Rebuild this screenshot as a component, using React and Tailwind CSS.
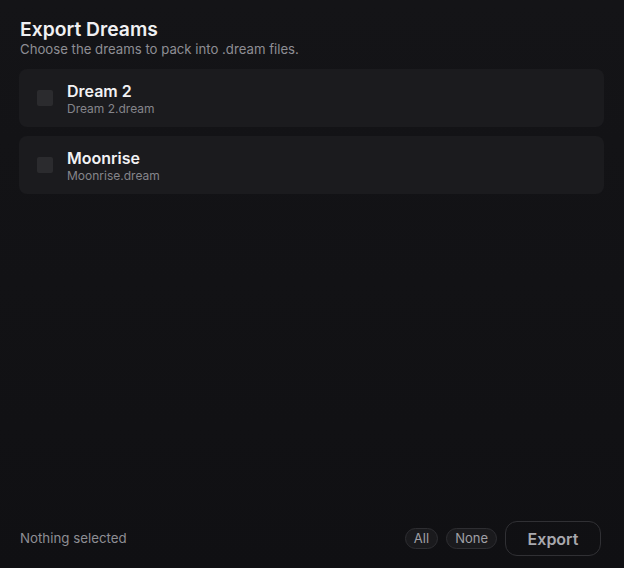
import { useState } from 'react';

const DREAMS = [
  { id: 'dream-2', name: 'Dream 2', file: 'Dream 2.dream' },
  { id: 'moonrise', name: 'Moonrise', file: 'Moonrise.dream' },
];

export default function App() {
  const [picked, setPicked] = useState([]);

  function toggle(id) {
    setPicked((cur) => (cur.includes(id) ? cur.filter((x) => x !== id) : [...cur, id]));
  }

  const label = picked.length === 0 ? 'Nothing selected' : `${picked.length} selected`;

  return (
    <div
      className="h-[568px] w-full flex flex-col bg-gradient-to-b from-[#141417] to-[#101013] text-[#ececef]"
      style={{ fontFamily: 'Inter, "Noto Sans", sans-serif' }}
    >
      <div className="px-5 pt-[18px]">
        <h1 className="text-[19.3px] leading-[22px] font-semibold text-[#f0f0f2]">Export Dreams</h1>
        <p className="text-[13.2px] leading-[18px] text-[#8e8e94]">Choose the dreams to pack into .dream files.</p>
      </div>

      <div className="flex flex-col gap-[9px] pl-[19px] pr-[20px] pt-[11px]">
        {DREAMS.map((d) => (
          <label
            key={d.id}
            className="flex items-center gap-[14px] h-[58px] rounded-lg bg-[#1b1b1e] pl-[18px] cursor-pointer"
          >
            <span
              onClick={(e) => { e.preventDefault(); toggle(d.id); }}
              className={`w-4 h-4 rounded-[2px] ${picked.includes(d.id) ? 'bg-[#6d6df0]' : 'bg-[#2b2b2e]'}`}
            />
            <div className="flex flex-col">
              <span className="text-[16px] leading-[20px] font-semibold text-[#f2f2f4]">{d.name}</span>
              <span className="text-[12px] leading-[15px] text-[#85858b]">{d.file}</span>
            </div>
          </label>
        ))}
      </div>

      <div className="mt-auto flex items-center justify-between pl-5 pr-[23px] pb-[12px]">
        <span className="text-[13.3px] text-[#8e8e94]">{label}</span>
        <div className="flex items-center gap-2">
          <button
            onClick={() => setPicked(DREAMS.map((d) => d.id))}
            className="h-[21px] px-[8px] rounded-full border border-[#2e2e32] bg-[#1a1a1d] text-[13px] text-[#a0a0a6]"
          >
            All
          </button>
          <button
            onClick={() => setPicked([])}
            className="h-[21px] px-[8px] rounded-full border border-[#2e2e32] bg-[#1a1a1d] text-[13px] text-[#a0a0a6]"
          >
            None
          </button>
          <button className="h-[35px] w-[96px] rounded-xl border border-[#303034] text-[16px] font-semibold text-[#a8a8ae]">
            Export
          </button>
        </div>
      </div>
    </div>
  );
}
